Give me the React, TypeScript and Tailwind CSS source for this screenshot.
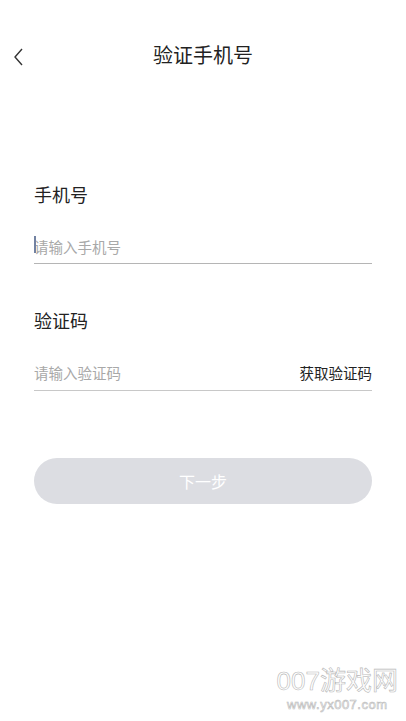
import { useState } from "react";

const font = "font-['Noto_Sans_CJK_SC','Noto_Sans',sans-serif]";

const App = () => {
    const [phone, setPhone] = useState("");
    const [code, setCode] = useState("");

    return (
        <div className={`relative w-[406px] h-[721px] bg-white overflow-hidden ${font}`}>
            <div className="relative flex items-center justify-center h-[40px] mt-[35px]">
                <button className="absolute left-[8px] top-[8px] p-1">
                    <svg width="14" height="20" viewBox="0 0 14 20" fill="none">
                        <path d="M10 2 L3 10 L10 18" stroke="#333" strokeWidth="1.4" />
                    </svg>
                </button>
                <h1 className="text-[20px] text-[#222] leading-none">验证手机号</h1>
            </div>

            <div className="px-[34px] pt-[110px]">
                <div className="text-[18px] text-[#222] leading-none">手机号</div>
                <div className="relative mt-[31px] border-b border-[#b5b5b5] pb-[5px]">
                    {/* caret */}
                    <span className="absolute left-0 top-[2px] w-[1.5px] h-[17px] bg-[#7282a2]" />
                    <input
                        value={phone}
                        onChange={(e) => setPhone(e.target.value)}
                        placeholder="请输入手机号"
                        className="w-full text-[14.5px] leading-[20px] text-[#333] placeholder:text-[#a8a8a8] outline-none caret-[#4a5a80]"
                    />
                </div>

                <div className="mt-[47px] text-[18px] text-[#222] leading-none">验证码</div>
                <div className="mt-[34px] flex items-center border-b border-[#c8c8c8] pb-[7px]">
                    <input
                        value={code}
                        onChange={(e) => setCode(e.target.value)}
                        placeholder="请输入验证码"
                        className="flex-1 text-[14.5px] leading-[20px] text-[#333] placeholder:text-[#a8a8a8] outline-none"
                    />
                    <button className="text-[14.5px] leading-[20px] text-[#222]">获取验证码</button>
                </div>

                <button className="mt-[67px] w-full h-[46px] rounded-full bg-[#dcdde2] text-white text-[16px]">
                    下一步
                </button>
            </div>

            <div className="absolute right-[8px] bottom-[10px] flex flex-col items-center text-transparent [-webkit-text-stroke:0.6px_#b8b8b8]">
                <div className="text-[26px] leading-none font-['Liberation_Sans','Noto_Sans_CJK_SC',sans-serif]">007游戏网</div>
                <div className="text-[13px] leading-none mt-[4px] tracking-[0.5px] font-['Liberation_Sans',sans-serif]">www.yx007.com</div>
            </div>
        </div>
    );
};

export default App;
